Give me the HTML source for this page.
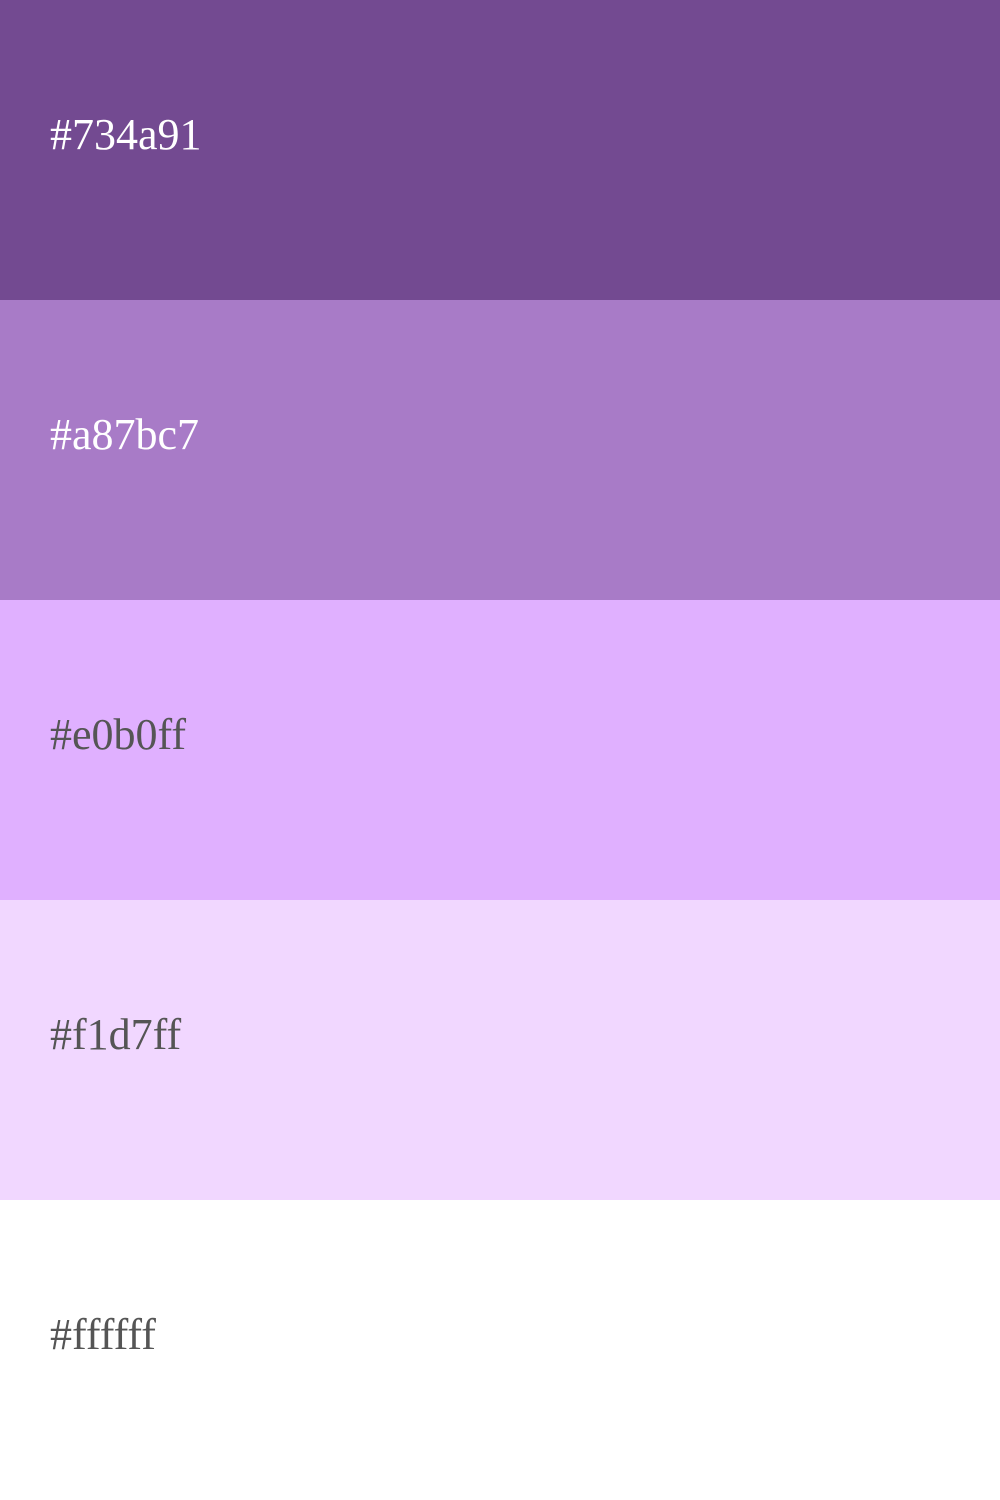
<!DOCTYPE html>
<html><head><style>
html,body{margin:0;padding:0;width:1000px;height:1500px;overflow:hidden}
.b{height:300px;position:relative;font-family:"Liberation Serif",serif;font-size:44px}
.b span{position:absolute;left:50px;top:110px;line-height:50px}
</style></head><body>
<div class="b" style="background:#734a91;color:#fff"><span>#734a91</span></div>
<div class="b" style="background:#a87bc7;color:#fff"><span>#a87bc7</span></div>
<div class="b" style="background:#e0b0ff;color:#555"><span>#e0b0ff</span></div>
<div class="b" style="background:#f1d7ff;color:#555"><span>#f1d7ff</span></div>
<div class="b" style="background:#ffffff;color:#555"><span>#ffffff</span></div>
</body></html>
